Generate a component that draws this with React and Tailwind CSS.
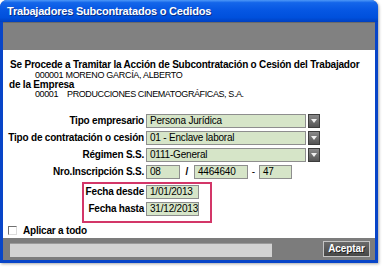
import React from "react";

function Drop() {
  return (
    <div className="ml-[2px] w-[12px] h-[14px] border border-[#3c3c3c] bg-[linear-gradient(to_bottom,#8a8a8a,#555555)] flex items-center justify-center">
      <svg width="6" height="4" viewBox="0 0 6 4">
        <path d="M0 0 L6 0 L3 4 Z" fill="#f0f0f0" />
      </svg>
    </div>
  );
}

function Field({ w, children }) {
  return (
    <div
      className={`${w} h-[14px] bg-[#d6e5c8] border border-[#8e8e8e] pl-[3px] text-[10px] leading-[12px] tracking-[-0.2px] whitespace-nowrap overflow-hidden`}
    >
      {children}
    </div>
  );
}

function Label({ children }) {
  return (
    <div className="w-[141px] text-right font-bold text-[10px] leading-[14px] tracking-[-0.2px] whitespace-nowrap">
      {children}
    </div>
  );
}

export default function App() {
  return (
    <div className="w-[384px] h-[267px] bg-white overflow-hidden font-['Liberation_Sans',Arial,sans-serif] text-black">
      <div className="w-[378px] h-[263px] flex flex-col rounded-t-[7px] overflow-hidden bg-[#0845c8] shadow-[1px_1px_3px_rgba(0,0,0,0.35)]">
        <div className="h-[22px] shrink-0 bg-[linear-gradient(to_bottom,#4d98f7_0%,#1466ea_12%,#0657e3_45%,#0050dc_80%,#0040c0_100%)] pl-[7px] pt-[5px] text-white font-bold text-[11px] leading-[12px] tracking-[-0.2px] [text-shadow:1px_1px_0_#0b2f86] whitespace-nowrap">
          Trabajadores Subcontratados o Cedidos
        </div>
        <div className="flex-1 mx-[3px] mb-[3px] flex flex-col bg-white">
          <div className="h-[28px] shrink-0 bg-[#818181] border-t border-[#6a6a6a]" />
          <div className="flex-1 flex flex-col pt-[9px]">
            <div className="pl-[7px] font-bold text-[10px] leading-[12px] tracking-[-0.2px] whitespace-nowrap">
              Se Procede a Tramitar la Acción de Subcontratación o Cesión del Trabajador
            </div>
            <div className="pl-[32px] text-[9px] leading-[9px] tracking-[-0.3px] whitespace-nowrap">
              000001 MORENO GARCÍA, ALBERTO
            </div>
            <div className="pl-[6px] font-bold text-[10px] leading-[9px] tracking-[-0.2px] whitespace-nowrap">
              de la Empresa
            </div>
            <div className="pl-[32px] flex text-[9px] leading-[10px] tracking-[-0.4px] whitespace-nowrap">
              <span>00001</span>
              <span className="ml-[9px]">PRODUCCIONES CINEMATOGRÁFICAS, S.A.</span>
            </div>

            <div className="mt-[15px] flex flex-col gap-[3px]">
              <div className="flex items-center h-[14px]">
                <Label>Tipo empresario</Label>
                <div className="ml-[2px] flex">
                  <Field w="w-[160px]">Persona Jurídica</Field>
                  <Drop />
                </div>
              </div>
              <div className="flex items-center h-[14px]">
                <Label>Tipo de contratación o cesión</Label>
                <div className="ml-[2px] flex">
                  <Field w="w-[160px]">01 - Enclave laboral</Field>
                  <Drop />
                </div>
              </div>
              <div className="flex items-center h-[14px]">
                <Label>Régimen S.S.</Label>
                <div className="ml-[2px] flex">
                  <Field w="w-[160px]">0111-General</Field>
                  <Drop />
                </div>
              </div>
              <div className="flex items-center h-[14px]">
                <Label>Nro.Inscripción S.S.</Label>
                <div className="ml-[2px] flex items-center">
                  <Field w="w-[34px]">08</Field>
                  <div className="w-[14px] text-center font-bold text-[10px] leading-[14px]">/</div>
                  <Field w="w-[54px]">4464640</Field>
                  <div className="w-[11px] text-center text-[10px] leading-[14px]">-</div>
                  <Field w="w-[33px]">47</Field>
                </div>
              </div>
            </div>

            <div className="mt-[3px] ml-[79px] w-[130px] h-[41px] border-2 border-[#d33668] pt-[1px] flex flex-col gap-[3px]">
              <div className="flex items-center h-[14px]">
                <div className="w-[60px] text-right font-bold text-[10px] leading-[14px] tracking-[-0.2px] whitespace-nowrap">
                  Fecha desde
                </div>
                <div className="ml-[2px]">
                  <Field w="w-[53px]">1/01/2013</Field>
                </div>
              </div>
              <div className="flex items-center h-[14px]">
                <div className="w-[60px] text-right font-bold text-[10px] leading-[14px] tracking-[-0.2px] whitespace-nowrap">
                  Fecha hasta
                </div>
                <div className="ml-[2px]">
                  <Field w="w-[53px]">31/12/2013</Field>
                </div>
              </div>
            </div>

            <div className="mt-[3px] flex items-center h-[9px]">
              <div className="ml-[5px] w-[9px] h-[9px] bg-white border-t border-l border-t-[#707070] border-l-[#707070] border-b border-r border-b-[#dcdcdc] border-r-[#dcdcdc]" />
              <div className="ml-[6px] font-bold text-[10px] leading-[10px] tracking-[-0.2px] whitespace-nowrap">
                Aplicar a todo
              </div>
            </div>
          </div>
          <div className="h-[22px] shrink-0 bg-[#7c7c7c] flex items-center">
            <div className="ml-[7px] mt-[2px] w-[262px] h-[14px] bg-[#d2d2d2] border-t border-[#9a9a9a]" />
            <div className="ml-auto mr-[5px] w-[47px] h-[16px] border border-[#c4c4c4] bg-[linear-gradient(to_bottom,#6a6a6a,#474747)] flex items-center justify-center text-white font-bold text-[10px] leading-[12px] tracking-[-0.1px] [text-shadow:1px_1px_0_#222]">
              Aceptar
            </div>
          </div>
        </div>
      </div>
    </div>
  );
}
